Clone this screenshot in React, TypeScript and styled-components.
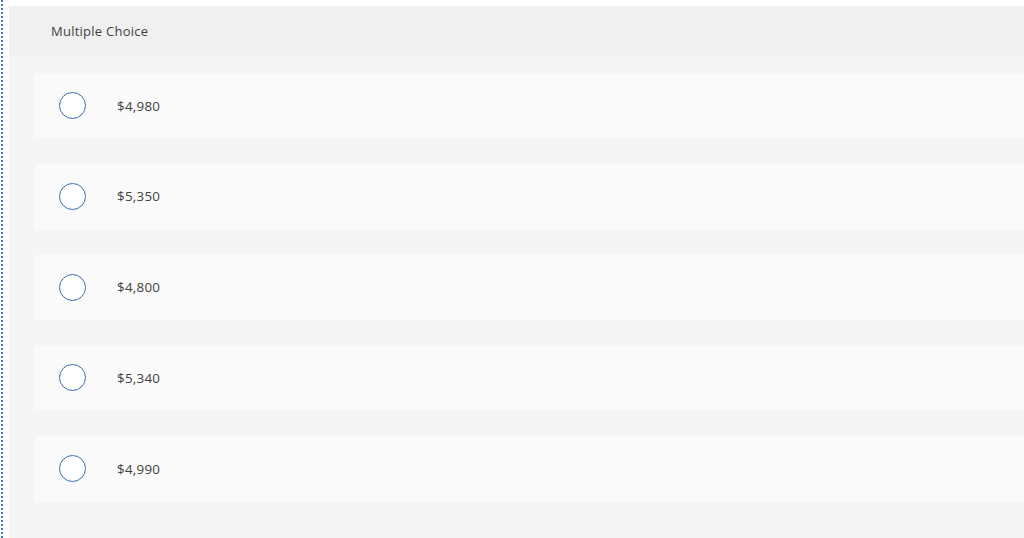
import React from 'react'
import styled, { createGlobalStyle } from 'styled-components'

const GlobalStyle = createGlobalStyle`
  html, body {
    margin: 0;
    padding: 0;
    background: #ffffff;
    font-family: 'Open Sans', Arial, sans-serif;
    overflow: hidden;
  }
`

const Page = styled.div`
  display: flex;
  height: 538px;
  padding-top: 6px;
  box-sizing: border-box;
  border-left: 2px dotted #3b78c4;
  margin-left: 1px;
`

const Question = styled.section`
  flex: 1;
  margin-left: 6px;
  background: #f5f5f5;
  display: flex;
  flex-direction: column;
`

const Header = styled.div`
  height: 50px;
  background: #f0f0f0;
  display: flex;
  align-items: center;
  padding-left: 42px;
  font-size: 13px;
  letter-spacing: 0.25px;
  color: #3f3f3f;
`

const Choices = styled.ul`
  list-style: none;
  margin: 0;
  padding: 17px 0 0 25px;
  display: flex;
  flex-direction: column;
  gap: 25.75px;
`

const Choice = styled.li`
  height: 65px;
  background: #fafafa;
  border-radius: 3px 0 0 3px;
  display: flex;
  align-items: center;
  padding-left: 25px;
  cursor: pointer;
`

const Radio = styled.span`
  width: 25px;
  height: 25px;
  border-radius: 50%;
  border: 1px solid #3a6ea8;
  background: #ffffff;
  flex-shrink: 0;
`

const Label = styled.span`
  margin-left: 31px;
  font-size: 13.4px;
  letter-spacing: 0.25px;
  color: #424242;
`

const options = ['$4,980', '$5,350', '$4,800', '$5,340', '$4,990']

const App: React.FC = () => (
  <>
    <GlobalStyle />
    <Page>
      <Question>
        <Header>Multiple Choice</Header>
        <Choices>
          {options.map(o => (
            <Choice key={o}>
              <Radio />
              <Label>{o}</Label>
            </Choice>
          ))}
        </Choices>
      </Question>
    </Page>
  </>
)

export default App
